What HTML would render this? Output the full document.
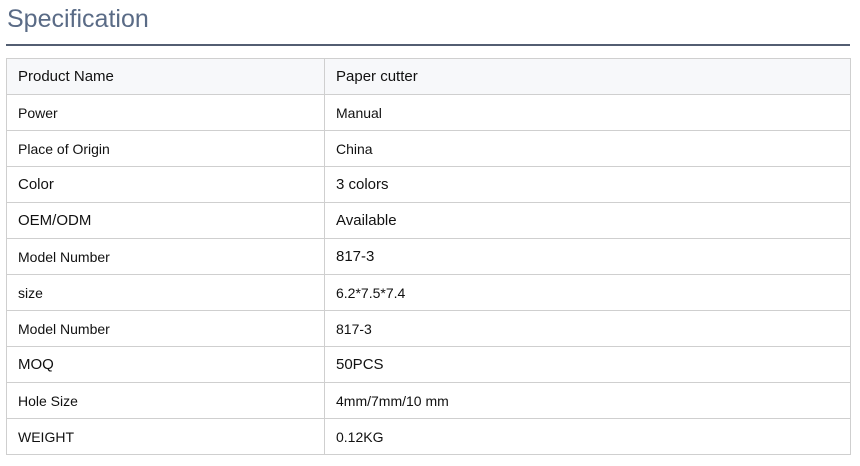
<!DOCTYPE html>
<html><head><style>
body{margin:0;background:#fff;font-family:"Liberation Sans",sans-serif;}
h1{position:absolute;left:7px;top:5px;margin:0;font-weight:normal;font-size:25px;color:#5a6b86;}
.line{position:absolute;left:6px;top:44px;width:844px;height:2px;background:#535e72;}
table{position:absolute;left:6px;top:58px;width:845px;border-collapse:collapse;}
td{border:1px solid #cfcfcf;height:36px;padding:0 0 0 11px;font-size:14px;color:#111;box-sizing:border-box;}
td:first-child{width:318px;}
td.b{font-size:15px;}
tr:first-child td{background:#f7f8fa;}
</style></head><body>
<h1>Specification</h1>
<div class="line"></div>
<table>
<tr><td class="b">Product Name</td><td class="b">Paper cutter</td></tr>
<tr><td>Power</td><td>Manual</td></tr>
<tr><td>Place of Origin</td><td>China</td></tr>
<tr><td class="b">Color</td><td class="b">3 colors</td></tr>
<tr><td class="b">OEM/ODM</td><td class="b">Available</td></tr>
<tr><td>Model Number</td><td class="b">817-3</td></tr>
<tr><td>size</td><td>6.2*7.5*7.4</td></tr>
<tr><td>Model Number</td><td>817-3</td></tr>
<tr><td class="b">MOQ</td><td class="b">50PCS</td></tr>
<tr><td>Hole Size</td><td>4mm/7mm/10 mm</td></tr>
<tr><td>WEIGHT</td><td>0.12KG</td></tr>
</table>
</body></html>
